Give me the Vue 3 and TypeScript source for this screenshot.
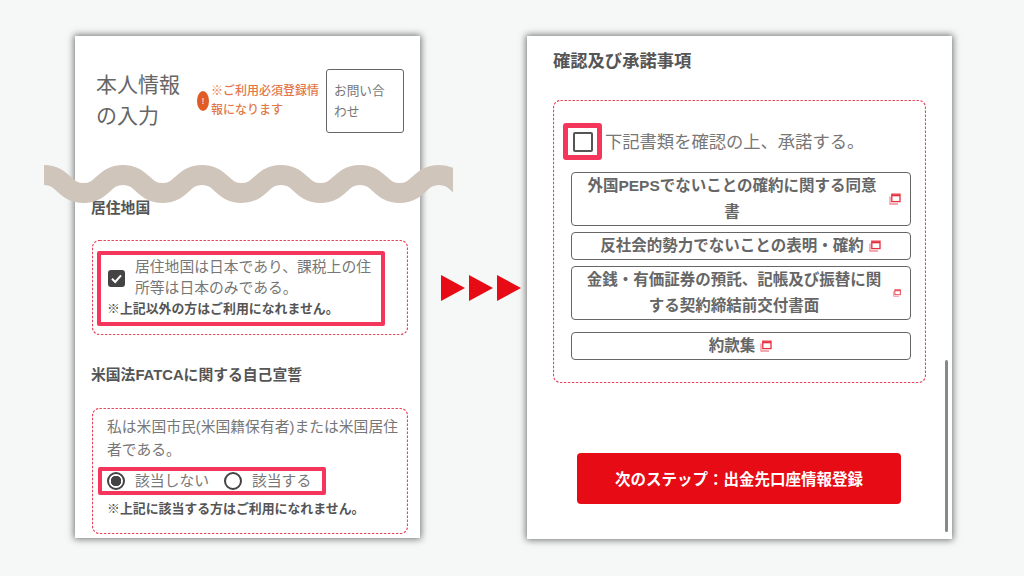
<script setup lang="ts">
interface DocLink {
  lines: string
  small?: boolean
  spaced?: boolean
}
const links: DocLink[] = [
  { lines: '外国PEPSでないことの確約に関する同意書' },
  { lines: '反社会的勢力でないことの表明・確約' },
  { lines: '金銭・有価証券の預託、記帳及び振替に関する契約締結前交付書面', small: true },
  { lines: '約款集', spaced: true },
]
const wavePath = (() => {
  const period = 79
  const half = period / 2
  let d = `M${-half * 2} 10`
  for (let i = -2; i < 12; i++) {
    const x = i * half
    const from = i % 2 === 0 ? 10 : 28
    const to = i % 2 === 0 ? 28 : 10
    d += ` C${x + half * 0.5} ${from} ${x + half * 0.5} ${to} ${x + half} ${to}`
  }
  return d
})()
</script>

<template>
  <main class="canvas">
    <section class="panel panel-left">
      <header class="top">
        <h1 class="title">本人情報の入力</h1>
        <div class="notice">
          <span class="notice-mark">!</span>
          <p class="notice-text">※ご利用必須登録情報になります</p>
        </div>
        <button class="contact" type="button">お問い合わせ</button>
      </header>

      <h2 class="heading heading-residence">居住地国</h2>
      <div class="dashed dashed-residence">
        <svg class="dash-frame" aria-hidden="true"><rect class="dash-rect" /></svg>
        <div class="mark mark-residence">
          <div class="check-row">
            <span class="check-on">
              <svg viewBox="0 0 17 17" width="17" height="17">
                <path d="M4 8.8 7.2 12 13 5.4" fill="none" stroke="#fff" stroke-width="2" />
              </svg>
            </span>
            <p class="body-text">居住地国は日本であり、課税上の住所等は日本のみである。</p>
          </div>
          <p class="note note-residence">※上記以外の方はご利用になれません。</p>
        </div>
      </div>

      <h2 class="heading heading-fatca">米国法FATCAに関する自己宣誓</h2>
      <div class="dashed dashed-fatca">
        <svg class="dash-frame" aria-hidden="true"><rect class="dash-rect" /></svg>
        <p class="body-text fatca-text">私は米国市民(米国籍保有者)または米国居住者である。</p>
        <div class="mark mark-radio">
          <span class="radio radio-on"></span>
          <span class="radio-label">該当しない</span>
          <span class="radio"></span>
          <span class="radio-label">該当する</span>
        </div>
        <p class="note note-fatca">※上記に該当する方はご利用になれません。</p>
      </div>
    </section>

    <div class="arrows">
      <span class="arrow"></span>
      <span class="arrow"></span>
      <span class="arrow"></span>
    </div>

    <section class="panel panel-right">
      <h2 class="heading-large">確認及び承諾事項</h2>
      <div class="dashed dashed-consent">
        <svg class="dash-frame" aria-hidden="true"><rect class="dash-rect" /></svg>
        <div class="consent-row">
          <span class="mark mark-box"><span class="check-off"></span></span>
          <span class="consent-text">下記書類を確認の上、承諾する。</span>
        </div>
        <a
          v-for="link in links"
          :key="link.lines"
          class="doc"
          :class="{ 'doc-spaced': link.spaced }"
        >
          <span class="doc-text">{{ link.lines }}</span>
          <svg
            class="doc-icon"
            :class="{ 'doc-icon-small': link.small }"
            viewBox="0 0 12 12"
          >
            <path d="M1 3.5V11h8" fill="none" stroke="#ee8f98" stroke-width="1.3" />
            <rect x="2.8" y="1.2" width="8.2" height="7.4" fill="#fff" stroke="#e5303f" stroke-width="1.3" />
            <path d="M2.8 2.6h8.2" stroke="#e5303f" stroke-width="1.4" />
          </svg>
        </a>
      </div>
      <button class="primary" type="button">次のステップ：出金先口座情報登録</button>
      <span class="scrollbar"></span>
    </section>

    <svg class="wave" viewBox="0 0 409 40" width="409" height="40" aria-hidden="true">
      <path :d="wavePath" fill="none" stroke="#d0c5bb" stroke-width="20" />
    </svg>
  </main>
</template>

<style>
html,
body {
  margin: 0;
  background: #f6f8f7;
}
</style>

<style scoped>
.canvas {
  position: relative;
  display: flex;
  align-items: flex-start;
  box-sizing: border-box;
  width: 1024px;
  height: 576px;
  padding: 36px 0 0 75px;
  overflow: hidden;
  background: #f6f8f7;
  color: #666;
  font-family: "Liberation Sans", "Noto Sans CJK JP", sans-serif;
}
h1,
h2,
p {
  margin: 0;
  font-weight: 400;
}
.panel {
  position: relative;
  box-sizing: border-box;
  flex: none;
  background: #fff;
  box-shadow: 0 0 7px 1px rgba(0, 0, 0, 0.55);
}
.panel-left {
  width: 345px;
  height: 502px;
  padding: 0 12px 0 17px;
}
.panel-right {
  width: 425px;
  height: 503px;
  padding: 0 26px;
}
.top {
  display: flex;
  align-items: flex-start;
  height: 97px;
  padding-top: 33px;
  box-sizing: border-box;
}
.title {
  flex: none;
  box-sizing: border-box;
  width: 105px;
  padding: 0 16px 0 4px;
  font-size: 21px;
  line-height: 31px;
  color: #666;
}
.notice {
  flex: none;
  display: flex;
  align-items: center;
  gap: 2px;
  width: 129px;
  height: 64px;
}
.notice-mark {
  flex: none;
  width: 12px;
  height: 20px;
  border-radius: 50%;
  background: #e05c24;
  color: #fff;
  font-size: 9px;
  line-height: 20px;
  text-align: center;
}
.notice-text {
  flex: none;
  width: 112px;
  font-size: 12px;
  line-height: 19px;
  color: #e2784a;
  font-weight: 500;
}
.contact {
  flex: none;
  box-sizing: border-box;
  width: 78px;
  height: 64px;
  padding: 2px 7px 0;
  margin: 0;
  border: 1px solid #666;
  border-radius: 3px;
  background: #fff;
  color: #777;
  font: 400 12.7px/21px "Liberation Sans", "Noto Sans CJK JP", sans-serif;
  text-align: left;
}
.heading {
  font-size: 14.8px;
  line-height: 22px;
  font-weight: 700;
  color: #555;
}
.heading-residence {
  margin: 64px 0 0 -1px;
}
.heading-fatca {
  margin: 29px 0 0 -1px;
}
.dashed {
  position: relative;
  box-sizing: border-box;
  border: 1px solid transparent;
}
.dash-frame {
  position: absolute;
  top: -1px;
  left: -1px;
  width: calc(100% + 2px);
  height: calc(100% + 2px);
  pointer-events: none;
}
.dash-rect {
  x: 0.5px;
  y: 0.5px;
  width: calc(100% - 1px);
  height: calc(100% - 1px);
  rx: 7px;
  fill: none;
  stroke: #e8465a;
  stroke-width: 1.2;
  stroke-dasharray: 2.4 1.6;
}
.dashed-residence {
  width: 316px;
  height: 95px;
  margin-top: 21px;
  padding: 10px 0 0 4px;
}
.dashed-fatca {
  width: 316px;
  height: 126px;
  margin-top: 22px;
  padding: 7px 0 0 5px;
}
.mark {
  box-sizing: border-box;
  border: 4px solid #f5365c;
  border-radius: 2px;
}
.mark-residence {
  width: 288px;
  height: 75px;
  padding: 2px 0 0 7px;
}
.check-row {
  display: flex;
  align-items: center;
  gap: 10px;
}
.check-on {
  flex: none;
  display: block;
  width: 17px;
  height: 17px;
  border-radius: 3px;
  background: #444;
  line-height: 0;
}
.body-text {
  font-size: 14.8px;
  line-height: 21px;
  color: #777;
}
.check-row .body-text {
  width: 240px;
}
.note {
  font-size: 12.9px;
  line-height: 18px;
  font-weight: 700;
  color: #555;
}
.note-residence {
  margin: 1px 0 0 -1px;
}
.fatca-text {
  padding-left: 9px;
  line-height: 23px;
  width: 304px;
  box-sizing: border-box;
}
.mark-radio {
  display: flex;
  align-items: center;
  width: 228px;
  height: 28px;
  margin-top: 5px;
  padding-left: 5px;
}
.radio {
  flex: none;
  box-sizing: border-box;
  width: 18px;
  height: 18px;
  border: 2px solid #444;
  border-radius: 50%;
  background: #fff;
}
.radio-on {
  background: radial-gradient(circle, #444 0 5px, #fff 5.5px);
}
.radio-label {
  font-size: 14.8px;
  line-height: 20px;
  color: #777;
  margin-left: 10px;
}
.radio-label:nth-of-type(2) {
  margin-right: 15px;
}
.note-fatca {
  margin: 5px 0 0 9px;
}
.arrows {
  flex: none;
  display: flex;
  gap: 4px;
  width: 107px;
  padding: 239px 0 0 21px;
  box-sizing: border-box;
}
.arrow {
  display: block;
  width: 24px;
  height: 26px;
  background: #e60b14;
  clip-path: polygon(0 0, 100% 50%, 0 100%);
}
.heading-large {
  padding-top: 13px;
  font-size: 17.3px;
  line-height: 24px;
  font-weight: 700;
  color: #555;
}
.dashed-consent {
  width: 373px;
  height: 283px;
  margin-top: 27px;
  padding: 22px 14px 0 17px;
}
.consent-row {
  display: flex;
  align-items: center;
  gap: 3px;
  margin-left: -8px;
}
.mark-box {
  flex: none;
  display: flex;
  align-items: center;
  justify-content: center;
  width: 39px;
  height: 37px;
  border-width: 5px;
  border-radius: 3px;
}
.check-off {
  display: block;
  box-sizing: border-box;
  width: 20px;
  height: 20px;
  border: 2px solid #555;
  border-radius: 2px;
}
.consent-text {
  font-size: 17.3px;
  line-height: 24px;
  color: #777;
}
.doc {
  display: flex;
  align-items: center;
  justify-content: center;
  gap: 5px;
  box-sizing: border-box;
  width: 340px;
  margin-top: 6px;
  padding: 0 9px 0 8px;
  border: 1px solid #666;
  border-radius: 4px;
  font-size: 15.5px;
  line-height: 26px;
  font-weight: 700;
  color: #666;
}
.consent-row + .doc {
  margin-top: 12px;
}
.doc-spaced {
  margin-top: 12px;
}
.doc-text {
  text-align: center;
}
.doc-icon {
  flex: none;
  width: 12px;
  height: 12px;
}
.doc-icon-small {
  width: 8px;
  height: 8px;
}
.primary {
  display: block;
  box-sizing: border-box;
  width: 324px;
  height: 51px;
  margin: 70px 0 0 24px;
  border: 0;
  border-radius: 4px;
  background: #e60b14;
  color: #fff;
  font: 700 15.5px/51px "Liberation Sans", "Noto Sans CJK JP", sans-serif;
  text-align: center;
}
.scrollbar {
  position: absolute;
  top: 324px;
  right: 4px;
  width: 3px;
  height: 172px;
  border-radius: 2px;
  background: #888;
}
.wave {
  position: absolute;
  left: 44px;
  top: 165px;
}
</style>
